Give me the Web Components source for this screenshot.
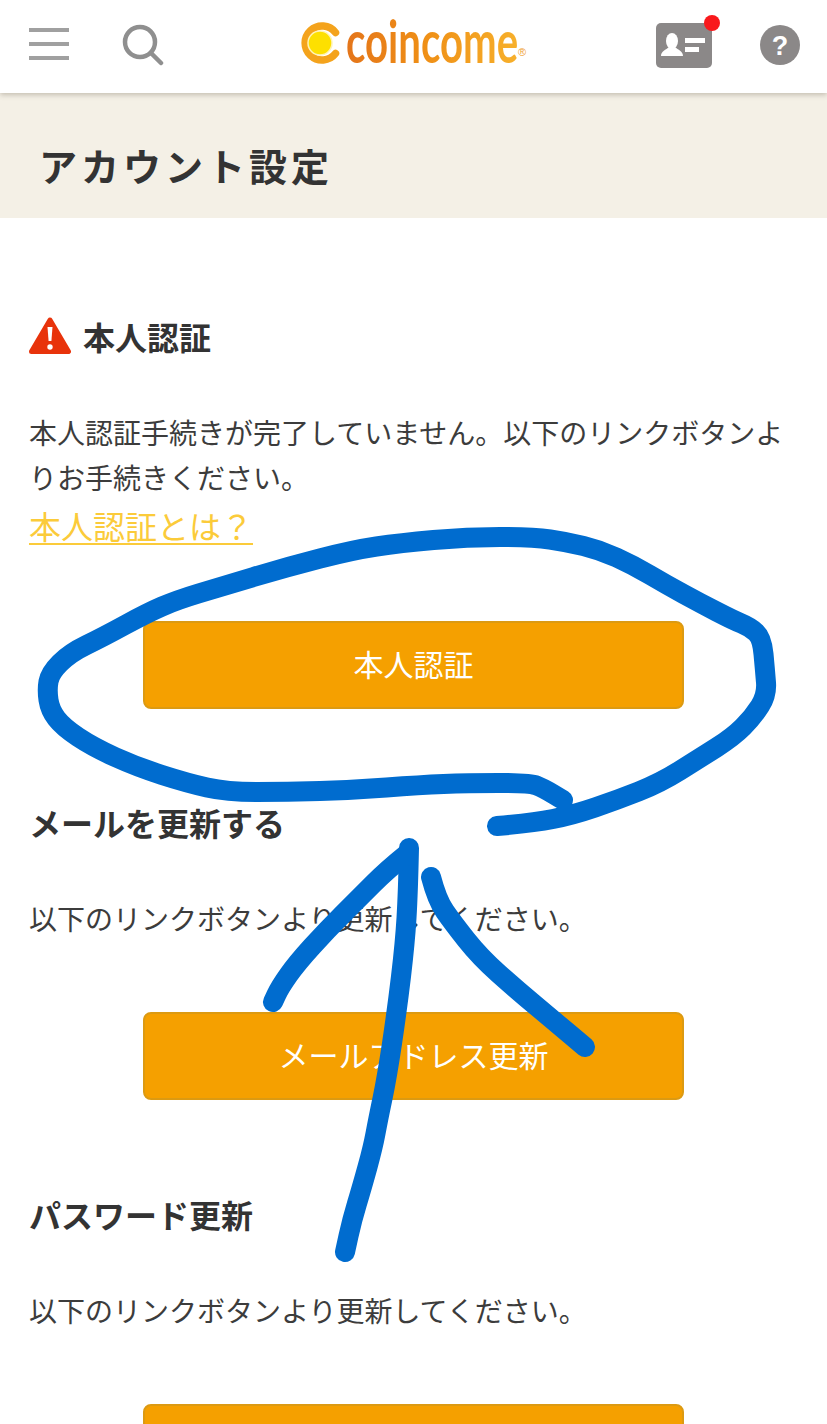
<!DOCTYPE html>
<html lang="ja">
<head>
<meta charset="utf-8">
<title>アカウント設定</title>
<style>
html, body { margin: 0; padding: 0; background: #fff; }
body { height: 1424px; overflow: hidden; position: relative; font-family: "Noto Sans CJK JP", sans-serif; color: #333; }
</style>
</head>
<body>
<app-header></app-header>
<page-title>アカウント設定</page-title>
<main-content>
  <setting-section warn style="--top: 95px">
    <span slot="heading">本人認証</span>
    <span>本人認証手続きが完了していません。以下のリンクボタンよりお手続きください。</span>
    <a slot="link" href="#">本人認証とは？</a>
    <action-button slot="action">本人認証</action-button>
  </setting-section>
  <setting-section style="--top: 90px">
    <span slot="heading">メールを更新する</span>
    <span>以下のリンクボタンより更新してください。</span>
    <action-button slot="action">メールアドレス更新</action-button>
  </setting-section>
  <setting-section style="--top: 91px">
    <span slot="heading">パスワード更新</span>
    <span>以下のリンクボタンより更新してください。</span>
    <action-button slot="action"></action-button>
  </setting-section>
</main-content>
<ink-marks></ink-marks>

<script>
class AppHeader extends HTMLElement {
    constructor() {
        super();
        this.attachShadow({ mode: 'open' });
        this.shadowRoot.innerHTML = `
        <style>
        :host { display: flex; align-items: center; height: 93px; background: #fff; padding: 0 27px 0 29px; position: relative; z-index: 2; box-shadow: 0 2px 5px rgba(90,80,60,.3); }
        .menu { width: 40px; height: 32px; display: flex; flex-direction: column; justify-content: space-between; margin-top: -6px; }
        .menu i { display: block; height: 4px; background: #a0a0a0; }
        .search { margin-left: 53px; margin-top: -4px; }
        .logo { position: absolute; left: 300px; top: 22px; width: 230px; height: 42px; }
        .logo svg { display: block; }
        .word { position: absolute; left: 46px; top: -18px; font: 700 60px/72px Lato, sans-serif; background: linear-gradient(90deg, #e4751a 0%, #ef8f16 45%, #f7b02b 100%); -webkit-background-clip: text; background-clip: text; color: transparent; transform: scaleX(.67); transform-origin: left center; }
        .r { position: absolute; left: 218px; top: 25px; font: 400 11px/1 "Liberation Sans", sans-serif; color: #f0a030; }
        .right { margin-left: auto; display: flex; align-items: center; gap: 48px; }
        .card { position: relative; width: 56px; height: 45px; margin-top: -3px; }
        .dot { position: absolute; right: -8px; top: -8px; width: 16px; height: 16px; border-radius: 50%; background: #f9191c; }
        .help { margin-top: -3px; }
        </style>
        <div class="menu"><i></i><i></i><i></i></div>
        <svg class="search" width="42" height="42" viewBox="0 0 42 42" fill="none" stroke="#8f8f8f" stroke-linecap="round">
          <circle cx="18" cy="18" r="15" stroke-width="4.5"/>
          <path d="M29 29 L39 39" stroke-width="4.5"/>
        </svg>
        <div class="logo">
          <svg width="42" height="42" viewBox="0 0 42 42">
            <path d="M35.5 10.5 A17 17 0 1 0 35.5 31.5" fill="none" stroke="#f4a31c" stroke-width="7.5" stroke-linecap="round"/>
            <circle cx="20" cy="21" r="12" fill="#fde000" stroke="#fff3b5" stroke-width="1.5"/>
          </svg>
          <span class="word">coincome</span>
          <span class="r">®</span>
        </div>
        <div class="right">
          <div class="card">
            <svg width="56" height="45" viewBox="0 0 56 45">
              <rect width="56" height="45" rx="5" fill="#8b8888"/>
              <ellipse cx="16" cy="18" rx="6" ry="8" fill="#fff"/>
              <path d="M5 33 C5 28 10 27 13 24 H19 C22 27 27 28 27 33 Z" fill="#fff"/>
              <rect x="29" y="15" width="20" height="5" fill="#fff"/>
              <rect x="29" y="24" width="14" height="5" fill="#fff"/>
            </svg>
            <span class="dot"></span>
          </div>
          <svg class="help" width="40" height="40" viewBox="0 0 40 40">
            <circle cx="20" cy="20" r="20" fill="#8b8888"/>
            <text x="20" y="30" text-anchor="middle" font-family="Liberation Sans, sans-serif" font-weight="700" font-size="27" fill="#fff">?</text>
          </svg>
        </div>
        `;
    }
}

class PageTitle extends HTMLElement {
    constructor() {
        super();
        this.attachShadow({ mode: 'open' });
        this.shadowRoot.innerHTML = `
        <style>
        :host { display: flex; align-items: center; box-sizing: border-box; height: 125px; padding: 18px 0 0 39px; background: #f4f0e6; font-size: 38px; font-weight: 700; letter-spacing: 4px; color: #333; }
        </style>
        <slot></slot>
        `;
    }
}

class MainContent extends HTMLElement {
    constructor() {
        super();
        this.attachShadow({ mode: 'open' });
        this.shadowRoot.innerHTML = `
        <style>
        :host { display: block; padding: 0 29px; }
        </style>
        <slot></slot>
        `;
    }
}

class SettingSection extends HTMLElement {
    constructor() {
        super();
        this.attachShadow({ mode: 'open' });
        const warn = this.hasAttribute('warn');
        this.shadowRoot.innerHTML = `
        <style>
        :host { display: block; padding-top: var(--top, 95px); }
        h2 { margin: 0; display: flex; align-items: center; gap: 12px; height: 46px; font-size: 32px; font-weight: 700; color: #333; }
        .body { margin-top: 51px; font-size: 28px; line-height: 45px; color: #3c3c3c; }
        .link { display: block; }
        ::slotted(a) { display: inline-block; margin-top: 2px; font-size: 32px; line-height: 46px; color: #fbcb3a; text-decoration: underline; text-underline-offset: 4px; text-decoration-thickness: 2px; }
        .action { display: flex; justify-content: center; margin-top: var(--gap, 71px); }
        </style>
        <h2>${warn ? `<svg width="42" height="38" viewBox="0 0 42 38">
          <path d="M21 3 L39.5 34.5 H2.5 Z" fill="#e8330b" stroke="#e8330b" stroke-width="5" stroke-linejoin="round"/>
          <path d="M18.5 10 H23.5 L22.4 24 H19.6 Z" fill="#fff"/>
          <circle cx="21" cy="30" r="2.7" fill="#fff"/>
        </svg>` : ''}<slot name="heading"></slot></h2>
        <div class="body"><slot></slot><div class="link"><slot name="link"></slot></div></div>
        <div class="action"><slot name="action"></slot></div>
        `;
    }
}

class ActionButton extends HTMLElement {
    constructor() {
        super();
        this.attachShadow({ mode: 'open' });
        this.shadowRoot.innerHTML = `
        <style>
        :host { display: flex; flex: none; align-items: center; justify-content: center; box-sizing: border-box; width: 541px; height: 88px; padding-bottom: 5px; background: #f5a000; border: 2px solid #dc9a12; border-radius: 8px; color: #fff; font-size: 30px; }
        </style>
        <slot></slot>
        `;
    }
}

// hand drawn strokes, traced from the screenshot
const STROKES = [
    [[497,826],[533,823],[573,815],[617,800],[660,783],[700,758],[733,737],[753,717],[767,695],[765,670],[762,638],[750,627],[733,620],[700,603],[667,585],[633,565],[600,550],[567,542],[533,537],[467,537],[400,543],[353,550],[287,567],[220,587],[177,600],[147,613],[103,637],[70,653],[50,673],[47,690],[50,710],[63,727],[93,747],[137,767],[187,783],[227,792],[287,792],[353,790],[420,785],[467,783],[530,783],[543,788],[563,800]],
    [[409,848],[408,893],[405,943],[397,1010],[387,1077],[378,1120],[373,1147],[362,1187],[352,1220],[345,1252]],
    [[408,853],[387,870],[360,897],[327,930],[297,963],[280,987],[273,1002]],
    [[431,877],[437,900],[453,923],[480,957],[517,990],[553,1020],[585,1047]]
];

function smoothPath(points) {
    let d = `M${points[0][0]} ${points[0][1]}`;
    for (let i = 1; i < points.length - 1; i++) {
        const midX = (points[i][0] + points[i + 1][0]) / 2;
        const midY = (points[i][1] + points[i + 1][1]) / 2;
        d += ` Q${points[i][0]} ${points[i][1]} ${midX} ${midY}`;
    }
    const last = points[points.length - 1];
    return d + ` L${last[0]} ${last[1]}`;
}

class InkMarks extends HTMLElement {
    constructor() {
        super();
        this.attachShadow({ mode: 'open' });
        const paths = STROKES.map(s => `<path d="${smoothPath(s)}"/>`).join('');
        this.shadowRoot.innerHTML = `
        <style>
        :host { display: block; position: absolute; left: 0; top: 0; z-index: 3; pointer-events: none; }
        svg { display: block; }
        </style>
        <svg width="827" height="1424" viewBox="0 0 827 1424" fill="none" stroke="#006ccf" stroke-width="20" stroke-linecap="round" stroke-linejoin="round">${paths}</svg>
        `;
    }
}

customElements.define('app-header', AppHeader);
customElements.define('page-title', PageTitle);
customElements.define('main-content', MainContent);
customElements.define('setting-section', SettingSection);
customElements.define('action-button', ActionButton);
customElements.define('ink-marks', InkMarks);
</script>
</body>
</html>
